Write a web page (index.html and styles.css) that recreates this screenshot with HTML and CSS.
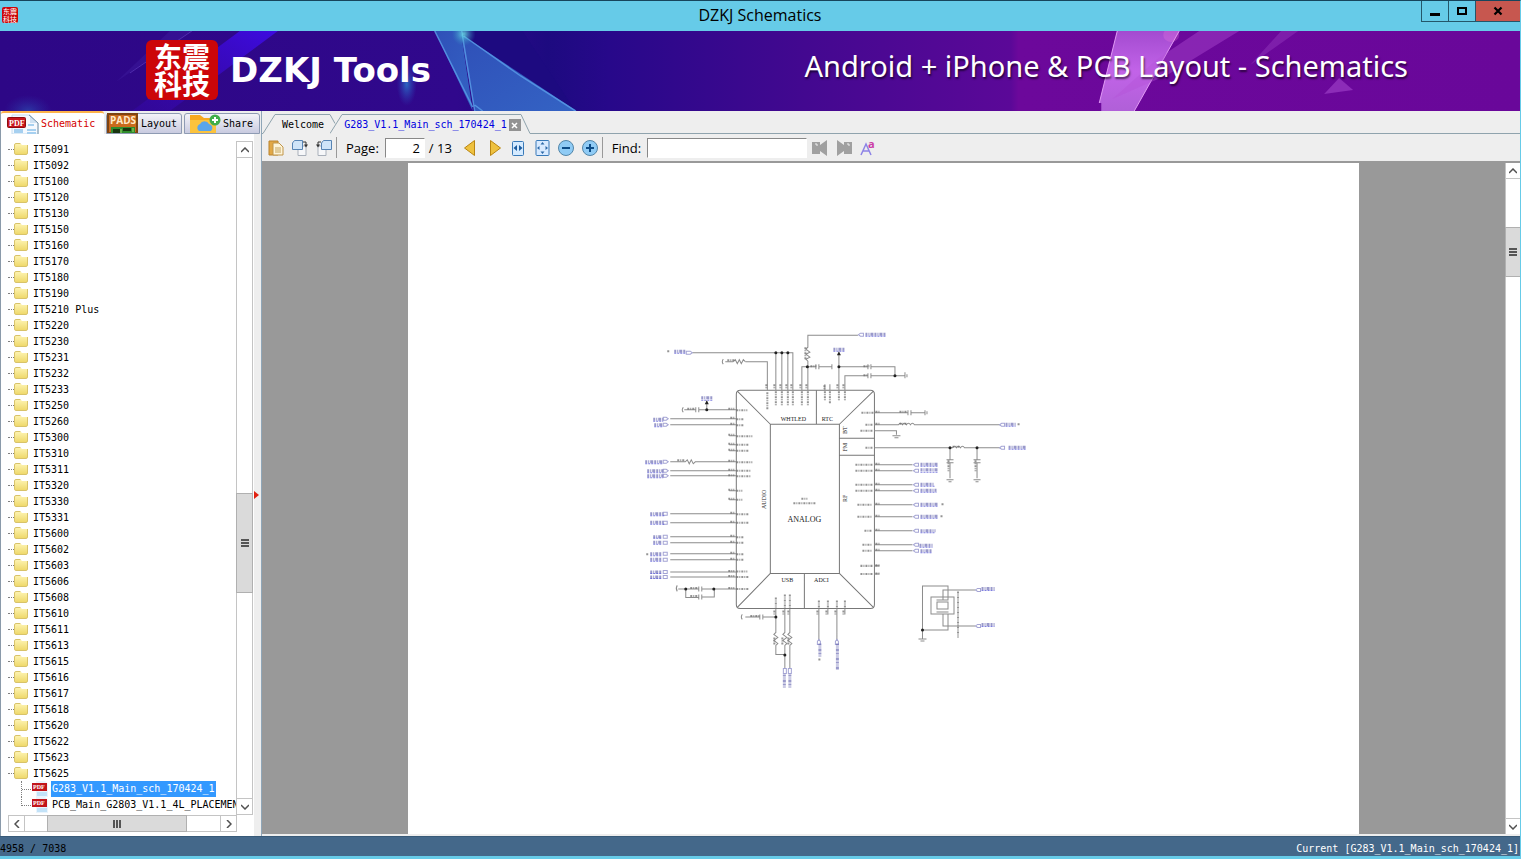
FILE: index.html
```
<!DOCTYPE html>
<html lang="en">
<head>
    <meta charset="UTF-8">
    <meta name="viewport" content="width=device-width, initial-scale=1.0">
    <title>DZKJ Schematics</title>
    <link rel="stylesheet" href="styles.css">
</head>
<body>
    <header class="titlebar">
        <span class="app-icon"><span>东震</span><span>科技</span></span>
        <h1 class="app-title">DZKJ Schematics</h1>
        <div class="window-buttons">
            <button aria-label="Minimize"><svg width="10" height="10"><path d="M0 7h10v3H0z"/></svg></button>
            <button aria-label="Maximize"><svg width="10" height="10"><path d="M1 2h8v6H1z" fill="none" stroke="#000" stroke-width="2"/></svg></button>
            <button class="close" aria-label="Close"><svg width="10" height="10"><path d="M1.500 1.500l7 7M8.500 1.500l-7 7" stroke="#000" stroke-width="2.200"/></svg></button>
        </div>
    </header>

    <div class="banner">
        <svg class="banner-bg" viewBox="0 31 1521 80" preserveAspectRatio="none" aria-hidden="true">
            <defs>
                <linearGradient id="base">
                    <stop offset="0" stop-color="#2d0786"/><stop offset=".3" stop-color="#30088c"/>
                    <stop offset=".36" stop-color="#1d0a80"/><stop offset=".4" stop-color="#27088a"/>
                    <stop offset=".53" stop-color="#430890"/><stop offset=".665" stop-color="#5b0898"/>
                    <stop offset=".67" stop-color="#6c089b"/><stop offset="1" stop-color="#69079a"/>
                </linearGradient>
                <linearGradient id="ray" x1="1" x2="0" y1="0" y2="1">
                    <stop offset="0" stop-color="#3d0be0"/><stop offset="1" stop-color="#3b08c0" stop-opacity=".25"/>
                </linearGradient>
                <linearGradient id="glass" x1="0" y1="0" x2="1" y2="1">
                    <stop offset="0" stop-color="#2f50b8"/><stop offset="1" stop-color="#3463c4"/>
                </linearGradient>
                <linearGradient id="pink" x1="0" y1="0" x2="0" y2="1">
                    <stop offset="0" stop-color="#a34bd0"/><stop offset=".5" stop-color="#c263e8"/><stop offset="1" stop-color="#b060d8"/>
                </linearGradient>
                <radialGradient id="glow"><stop offset="0" stop-color="#2a7fd0" stop-opacity=".8"/><stop offset="1" stop-color="#2a4fc0" stop-opacity="0"/></radialGradient>
                <radialGradient id="spark"><stop offset="0" stop-color="#6ff0ee"/><stop offset="1" stop-color="#3090c0" stop-opacity="0"/></radialGradient>
            </defs>
            <path d="M0 31h1521v80H0z" fill="url(#base)"/>
            <path d="M240 31h38L170 111h-38z" fill="url(#ray)"/>
            <path d="M170 31h22L116 82z" fill="#4a2ab0" opacity=".25"/>
            <path d="M192 31L130 73" stroke="#6f4fd0" opacity=".5"/>
            <ellipse cx="28" cy="111" rx="24" ry="16" fill="url(#glow)" opacity=".5"/>
            <ellipse cx="407" cy="84" rx="10" ry="22" fill="url(#glow)"/>
            <path d="M463 31h60l3 5 50 75h-98z" fill="#1d0a80"/>
            <path d="M435 31h26l12 80z" fill="url(#glass)"/>
            <path d="M461 34l14 77h102z" fill="url(#glass)"/>
            <path d="M435 31l38 76M462 31l13 80M464 36l57 40 55 35M475 105l8 6" fill="none" stroke="#5a9de8" stroke-width="1.500" opacity=".8"/>
            <circle cx="464" cy="34" r="12" fill="url(#spark)" opacity=".8"/>
            <path d="M1118 31h62l-45 80h-33v-8h-2z" fill="url(#pink)"/>
            <path d="M1180 31l-45 80M1118 31l-18 72" stroke="#e29bf5" fill="none"/>
            <path d="M1200 31h40l-72 44 -55 24 45-40z" fill="#b452d6" opacity=".4"/>
            <path d="M1282 31h17l-48 34z" fill="#9a40c4" opacity=".4"/>
            <path d="M1340 78l14 12-29 4z" fill="#8c2cb8"/>
            <ellipse cx="1172" cy="35" rx="8" ry="7" fill="#f27fe0" opacity=".25"/>
        </svg>
        <div class="brand">
            <span class="logo"><span>东震</span><span>科技</span></span>
            <strong class="brand-name">DZKJ Tools</strong>
        </div>
        <p class="tagline">Android + iPhone &amp; PCB Layout - Schematics</p>
    </div>

    <div class="workspace">
        <aside class="sidebar">
            <nav class="side-tabs">
                <button class="side-tab active">
                    <svg width="32" height="20" viewBox="0 0 32 20"><path d="M5 1h18l8 8v11H5z" fill="#f5f9fe" stroke="#c4dcee"/><path d="M23 1v8h8z" fill="#cfe2f3"/><path d="M22 1l9 8v11" fill="none" stroke="#7c95a8"/><path d="M7 16h9M21 11h6M20 16h9M7 18h9M20 19h9" stroke="#a6d0f0" stroke-width="2"/><rect x=".5" y="3.500" width="18" height="10" rx="1" fill="#c8151b" stroke="#8c0b10"/><text x="2" y="12" class="badge-text">PDF</text></svg>
                    Schematic
                </button>
                <button class="side-tab">
                    <svg width="32" height="20" viewBox="0 0 32 20"><path d="M1 1h29v19H1z" fill="#c96a1c" stroke="#7d4312" stroke-width="2"/><text x="3" y="11" class="pads-text">PADS</text><path d="M4 14h24v6H4z" fill="#2f8c2c"/><path d="M6 16h7v4H6zM16 15h8v3h-8z" fill="#19350f"/><path d="M14 16v4M26 15v4" stroke="#a2dc6a"/></svg>
                    Layout
                </button>
                <button class="side-tab share">
                    <svg width="32" height="20" viewBox="0 0 32 20"><path d="M1 2h10l4 3h11v15H1z" fill="#f6a81f"/><path d="M1 7h26v13H1z" fill="#fcc33c"/><path d="M9 17a4 4 0 0 1 2-6 5 5 0 0 1 9 0 4 4 0 0 1 2 7H10z" fill="#5aa5ea"/><circle cx="26" cy="7" r="5.500" fill="#3fae49"/><path d="M26 4v6M23 7h6" stroke="#fff" stroke-width="2"/></svg>
                    Share
                </button>
            </nav>
            <div class="tree-pane">
                <div class="tree-view">
                    <ul class="tree">
                        <li><i class="folder"></i>IT5091</li>
                        <li><i class="folder"></i>IT5092</li>
                        <li><i class="folder"></i>IT5100</li>
                        <li><i class="folder"></i>IT5120</li>
                        <li><i class="folder"></i>IT5130</li>
                        <li><i class="folder"></i>IT5150</li>
                        <li><i class="folder"></i>IT5160</li>
                        <li><i class="folder"></i>IT5170</li>
                        <li><i class="folder"></i>IT5180</li>
                        <li><i class="folder"></i>IT5190</li>
                        <li><i class="folder"></i>IT5210 Plus</li>
                        <li><i class="folder"></i>IT5220</li>
                        <li><i class="folder"></i>IT5230</li>
                        <li><i class="folder"></i>IT5231</li>
                        <li><i class="folder"></i>IT5232</li>
                        <li><i class="folder"></i>IT5233</li>
                        <li><i class="folder"></i>IT5250</li>
                        <li><i class="folder"></i>IT5260</li>
                        <li><i class="folder"></i>IT5300</li>
                        <li><i class="folder"></i>IT5310</li>
                        <li><i class="folder"></i>IT5311</li>
                        <li><i class="folder"></i>IT5320</li>
                        <li><i class="folder"></i>IT5330</li>
                        <li><i class="folder"></i>IT5331</li>
                        <li><i class="folder"></i>IT5600</li>
                        <li><i class="folder"></i>IT5602</li>
                        <li><i class="folder"></i>IT5603</li>
                        <li><i class="folder"></i>IT5606</li>
                        <li><i class="folder"></i>IT5608</li>
                        <li><i class="folder"></i>IT5610</li>
                        <li><i class="folder"></i>IT5611</li>
                        <li><i class="folder"></i>IT5613</li>
                        <li><i class="folder"></i>IT5615</li>
                        <li><i class="folder"></i>IT5616</li>
                        <li><i class="folder"></i>IT5617</li>
                        <li><i class="folder"></i>IT5618</li>
                        <li><i class="folder"></i>IT5620</li>
                        <li><i class="folder"></i>IT5622</li>
                        <li><i class="folder"></i>IT5623</li>
                        <li><i class="folder"></i>IT5625</li>
                        <li class="file"><svg width="16" height="16"><use href="#pdf"/></svg><span class="selected">G283_V1.1_Main_sch_170424_1</span></li>
                        <li class="file last"><svg width="16" height="16"><use href="#pdf"/></svg><span>PCB_Main_G2803_V1.1_4L_PLACEMENT</span></li>
                    </ul>
                    <div class="scroll-v">
                        <button aria-label="Scroll up"><svg width="8" height="6"><use href="#up"/></svg></button>
                        <div class="track"><div class="thumb tree-thumb"></div></div>
                        <button aria-label="Scroll down"><svg width="8" height="6"><use href="#down"/></svg></button>
                    </div>
                </div>
                <div class="scroll-h">
                    <button aria-label="Scroll left"><svg width="6" height="8"><path d="M5 0L1 4l4 4" fill="none" stroke="#505050" stroke-width="1.500"/></svg></button>
                    <div class="track"><div class="thumb tree-thumb-h"></div></div>
                    <button aria-label="Scroll right"><svg width="6" height="8"><path d="M1 0l4 4-4 4" fill="none" stroke="#505050" stroke-width="1.500"/></svg></button>
                </div>
            </div>
            <div class="splitter"><svg width="5" height="8"><path d="M0 0l5 4-5 4z" fill="#e02010"/></svg></div>
        </aside>

        <main class="document">
            <nav class="doc-tabs">
                <svg width="14" height="23"><path d="M0 22.500h1L13 3.500h1" class="edge"/></svg>
                <button class="doc-tab">Welcome</button>
                <svg width="14" height="23"><path d="M0 3.500l5 9M0 22.500L12 3.500h2" class="edge"/></svg>
                <button class="doc-tab current">G283_V1.1_Main_sch_170424_1</button>
                <span class="tab-end"><button class="tab-close" aria-label="Close tab"><svg width="7" height="7"><path d="M1 1l5 5M6 1L1 6" stroke="#fff" stroke-width="1.500"/></svg></button></span>
                <svg width="10" height="23"><path d="M0 3.500l9 19h1" class="edge"/></svg>
                <span class="tab-fill"></span>
            </nav>

            <div class="toolbar">
                <button aria-label="Open"><svg width="16" height="16"><path d="M1 1h9v14H1z" fill="#e2a845" stroke="#b9832f"/><path d="M5 3h6l4 4v8H5z" fill="#fdf4d9" stroke="#c09548"/><path d="M7 8h6M7 10h6M7 12h6" stroke="#c5a45c"/></svg></button>
                <button aria-label="Rotate left"><svg width="16" height="16"><path d="M6 6h8v9.500H6z" fill="#f6f7f9" stroke="#a9b0ba"/><path d="M.5 3l2-2.500h8v9h-10z" fill="#cfe4f8" stroke="#5784b4"/><path d="M11 2h3v4" fill="none" stroke="#333"/><path d="M12 4.500h4l-2 3z" fill="#333"/></svg></button>
                <button aria-label="Rotate right"><svg width="16" height="16"><path d="M2 6h8v9.500H2z" fill="#f6f7f9" stroke="#a9b0ba"/><path d="M5.500 3l2-2.500h8v9h-10z" fill="#cfe4f8" stroke="#5784b4"/><path d="M5 2H2v4" fill="none" stroke="#333"/><path d="M0 4.500h4l-2 3z" fill="#333"/></svg></button>
                <span class="separator"></span>
                <label for="page">Page:</label>
                <input id="page" class="page-input" type="text" value="2">
                <span class="page-count">/ 13</span>
                <button aria-label="Previous page"><svg width="16" height="16"><path d="M12.500 .5v15L2.500 8z" fill="#eec13f" stroke="#b98512"/></svg></button>
                <button aria-label="Next page"><svg width="16" height="16"><path d="M4.500 .5v15l10-7.500z" fill="#eec13f" stroke="#b98512"/></svg></button>
                <button aria-label="Fit width"><svg width="16" height="16"><rect x="2.500" y="1.500" width="11" height="14" rx="1" fill="#d4eaff" stroke="#3879b8"/><path d="M7 5v6L3.500 8zM9 5v6l3.500-3z" fill="#1c5c9f"/></svg></button>
                <button aria-label="Fit page"><svg width="16" height="16"><rect x="2" y=".5" width="13" height="15" rx="1" fill="#d8eaff" stroke="#3879b8"/><path d="M8.500 2l2 2.500h-4zM8.500 14l2-2.500h-4zM3 8l2.500-2v4zM14 8l-2.500-2v4z" fill="#2c69a8"/></svg></button>
                <button aria-label="Zoom out"><svg width="16" height="16"><circle cx="8" cy="8" r="7.500" fill="#8fcbf5" stroke="#5386a8"/><path d="M4 8h8" stroke="#0c4c87" stroke-width="2"/></svg></button>
                <button aria-label="Zoom in"><svg width="16" height="16"><circle cx="8" cy="8" r="7.500" fill="#8fcbf5" stroke="#5386a8"/><path d="M4 8h8M8 4v8" stroke="#0c4c87" stroke-width="2"/></svg></button>
                <span class="separator"></span>
                <label for="find">Find:</label>
                <input id="find" class="find-input" type="text">
                <button aria-label="Find previous"><svg width="16" height="16"><path d="M0 2h8v3l7-5v16l-7-5v3H0z" fill="#a0a0a0"/><path d="M3 4h2v2" stroke="#eee" fill="none"/></svg></button>
                <button aria-label="Find next"><svg width="16" height="16"><path d="M16 2H8v3L1 0v16l7-5v3h8z" fill="#a0a0a0"/><path d="M11 4h2v2" stroke="#eee" fill="none"/></svg></button>
                <button aria-label="Match case"><svg class="case-icon" width="16" height="16"><path d="M1 15L6 4l5 11M3 11h6" fill="none" stroke="#8d83e6" stroke-width="1.500"/><text x="8" y="8" class="case-text">a</text></svg></button>
            </div>

            <div class="viewer">
                <div class="canvas">
                    <div class="page">
                        <svg class="schematic" viewBox="408 163 950 671" preserveAspectRatio="xMidYMin meet" role="img" aria-label="Analog block schematic">
                            <!-- chip body -->
                            <g class="wire body">
                                <path d="M740 390h130q4 0 4 4v210q0 4-4 4H740q-4 0-4-4V394q0-4 4-4z"/>
                                <path d="M770 424h69v149h-69zM737 391l33 33M873 391l-34 33M737 607l33-34M873 607l-34-34M816 390v34M839 438h35M839 455h35M804 573v35"/>
                            </g>
                            <g class="block-name">
                                <text x="793" y="421">WHTLED</text><text x="827" y="421">RTC</text>
                                <text x="787" y="582">USB</text><text x="821" y="582">ADCI</text>
                                <text transform="translate(766 499) rotate(-90)">AUDIO</text>
                                <text transform="translate(847 430) rotate(-90)">BT</text>
                                <text transform="translate(847 447) rotate(-90)">FM</text>
                                <text transform="translate(847 498) rotate(-90)">RF</text>
                                <text x="804" y="522" class="chip-name">ANALOG</text>
                            </g>
                            <!-- top nets -->
                            <g class="wire">
                                <path d="M692 352.500h101M775.500 352v38M781.500 352v38M787.500 352v38M792.500 352v38M745 361.500h22V390M725 361.500h8M723 359q-2 2.500 0 5"/>
                                <path d="M733 361.500l2-2 2 4 2-4 2 4 2-4 2 2"/>
                                <path d="M807.500 390v-29l-2-2 4-2-4-3 4-2-4-3 2-2v-12h50M801.500 390v-23.500h14M818.500 366.500h13M815.500 364v5M818.500 364v5M831.500 364v5"/>
                                <path d="M838.500 390v-36M838.500 366.500h29M870.500 366.500h24v9M844.500 390v-14.500h23M870.500 375.500h34M867.500 364v5M870.500 364v5M867.500 373v5M870.500 373v5M904.500 372v6M906.500 374v3"/>
                                <path d="M824.500 384v6M829.500 384v6"/>
                            </g>
                            <!-- left nets -->
                            <g class="wire">
                                <path d="M684 409.500h11M698 409.500h38M695.500 407v5M698.500 407v5M683 407q-2 2.500 0 5M706.500 401v9M670 418.500h66M670 424.500h66M670 461.500h15l2-2 2 4 2-4 2 4 2-2h41M670 470.500h66M670 475.500h66"/>
                                <path d="M670 513.500h66M670 522.500h66M670 536.500h66M670 542.500h66M670 553.500h66M670 559.500h66M670 571.500h66M670 576.500h66M678 588.500h21M702 588.500h34M685.500 588v9h13M702 596.500h12v-8M698.500 586v5M701.500 586v5M698.500 594v5M701.500 594v5M677 585q-2 3 0 6"/>
                                <path d="M729 435.500h7M729 444.500h7M729 450.500h7M729 490.500h7M729 499.500h7"/>
                            </g>
                            <!-- right nets -->
                            <g class="wire">
                                <path d="M874 412.500h33M910 412.500h14M907.500 410v5M910.500 410v5M924.500 410v5M926.500 411v3M874 424.500h24q2-3 4 0q2-3 4 0q2-3 4 0q2-3 4 0h86M874 430.500h22v4M892 435.500h8M894 437.500h4"/>
                                <path d="M874 447.500h78q2-3 4 0q2-3 4 0q2-3 4 0h38M949.500 447v12M949.500 462v16M976.500 447v12M976.500 462v16M946 459.500h7M946 462.500h7M973 459.500h7M973 462.500h7M946 479.500h7M948 481.500h3M973 479.500h7M975 481.500h3"/>
                                <path d="M874 464.500h38M874 470.500h38M874 484.500h38M874 490.500h38M874 504.500h38M874 516.500h38M874 530.500h38M874 544.500h38M874 550.500h38M874 565.500h5M874 573.500h5"/>
                            </g>
                            <!-- bottom nets -->
                            <g class="wire">
                                <path d="M745 616.500h14M762 616.500h13M759.500 614v5M762.500 614v5M742 614q-2 2.500 0 5"/>
                                <path d="M775.500 608v24l-2 2 4 3-4 3 4 3-2 2v9h9M784.500 608v24l-2 2 4 3-4 3 4 3-2 2v23M789.500 608v24l-2 2 4 3-4 3 4 3-2 2v23M818.500 608v32M836.500 608v32M827.500 608v6M844.500 608v6"/>
                                <path d="M975 589.500h-32.500v10M947.500 600v-14.500h-25.500v53M922 629.500h25.500v-16M975 625.500h-32.500v-12M918 638.500h8M920 640.500h4M930.500 596.500h23v17h-23zM936.500 601.500h11v7h-11zM936 599.500h12M936 611.500h12"/>
                            </g>
                            <g class="dots">
                                <circle cx="775.500" cy="352.500" r="1.500"/><circle cx="781.500" cy="352.500" r="1.500"/><circle cx="787.500" cy="352.500" r="1.500"/>
                                <circle cx="807" cy="366.500" r="1.500"/><circle cx="838.500" cy="366.500" r="1.500"/><circle cx="894.500" cy="375.500" r="1.500"/>
                                <circle cx="706.500" cy="409.500" r="1.500"/><circle cx="685.500" cy="588.500" r="1.500"/><circle cx="713.500" cy="588.500" r="1.500"/>
                                <circle cx="949.500" cy="447.500" r="1.500"/><circle cx="976.500" cy="447.500" r="1.500"/><circle cx="775.500" cy="616.500" r="1.500"/>
                                <circle cx="784.500" cy="654.500" r="1.500"/><circle cx="922" cy="629.500" r="1.500"/>
                                <path d="M838.500 351l2 4h-4zM706.500 400l2 4h-4z"/>
                            </g>
                            <!-- net ports -->
                            <g class="port">
                                <path d="M686 351h4l2 1.500-2 1.500h-4zM863 333h-3l-2 1.500 2 1.500h3zM1004 423h-3l-2 1.500 2 1.500h3zM1004 446h-3l-2 1.500 2 1.500h3zM980 588h-3l-2 1.500 2 1.500h3zM980 624h-3l-2 1.500 2 1.500h3z"/>
                                <path d="M663 417h3l2 1.500-2 1.500h-3zM663 423h3l2 1.500-2 1.500h-3zM663 460h3l2 1.500-2 1.500h-3zM663 469h3l2 1.500-2 1.500h-3zM663 474h3l2 1.500-2 1.500h-3z"/>
                                <path d="M663 512h4v3h-4zM663 521h4v3h-4zM663 535h4v3h-4zM663 541h4v3h-4zM663 552h4v3h-4zM663 558h4v3h-4zM663 570h4v3h-4zM663 575h4v3h-4z"/>
                                <path d="M918 463h-3l-2 1.500 2 1.500h3zM918 469h-3l-2 1.500 2 1.500h3zM918 483h-3l-2 1.500 2 1.500h3zM918 489h-3l-2 1.500 2 1.500h3zM918 503h-3l-2 1.500 2 1.500h3zM918 515h-3l-2 1.500 2 1.500h3zM918 529h-3l-2 1.500 2 1.500h3zM918 543h-3l-2 1.500 2 1.500h3zM918 549h-3l-2 1.500 2 1.500h3z"/>
                                <path d="M817 644v-3l1.500-2 1.500 2v3zM835 644v-3l1.500-2 1.500 2v3zM783 668h3v5h-3zM788 668h3v5h-3z"/>
                            </g>
                            <!-- net names, too small to read at this zoom -->
                            <g class="net">
                                <path d="M674 351h12M865 334h21M833 349h12M701 397.500h12M653 419h10M654 424.500h9M645 461.500h18M647 470.500h16M647 475.500h16"/>
                                <path d="M650 513.500h14M650 522h14M653 536.500h9M653 542h9M650 553.500h12M650 559h12M650 571.500h12M650 576.500h12"/>
                                <path d="M1005 424h10M1008 447h18M920 464h17M920 469.500h17M920 484h14M920 490h16M920 504h17M920 516h17M920 530.500h15M919 545h13M920 550.500h12M981 588h13M981 624h13"/>
                                <path d="M819.500 643v14M837 643v26M784 674v13M789.500 674v13"/>
                            </g>
                            <g class="net-line">
                                <path d="M674 353h12M865 336h21M833 351h12M701 400h12M653 421h10M654 426.500h9M645 463.500h18M647 472.500h16M647 477.500h16M650 515.500h14M650 524h14M653 538h9M653 544h9M650 555.500h12M650 561h12M650 573h12M650 578h12M1005 426h10M1008 449h18M920 466h17M920 472h17M920 486h14M920 492h16M920 506h17M920 518h17M920 532.500h15M919 547h13M920 552.500h12M981 590h13M981 626h13"/>
                            </g>
                            <!-- pin names and part values -->
                            <g class="pin">
                                <path d="M736 410h11M736 419h7M736 425h7M736 436h16M736 444.500h12M736 450.500h12M736 462h16M736 470.500h14M736 476h14M736 490.500h6M736 499.500h6M736 514h13M736 522.500h13M736 537h8M736 542.500h8M736 554h8M736 559.500h8M736 571h11M736 576.500h12M736 588.500h13"/>
                                <path d="M728 408.500h6M730 417.500h4M730 423.500h4M728 434.500h6M728 443.500h6M728 449.500h6M728 460.500h6M728 469.500h6M728 475h6M728 489.500h6M728 498.500h6M730 512.500h4M730 521.500h4M730 535.500h4M730 541.500h4M730 552.500h4M730 558.500h4M728 570.500h6M728 575.500h6M728 587.500h6"/>
                                <path d="M861 412.500h12M865 424.500h7M860 430.500h12M865 447.500h7M855 464.500h17M855 470.500h17M855 484.500h17M855 490.500h17M857 504.500h15M857 516.500h15M864 530.500h8M862 544.500h9M862 550.500h9M860 565.500h12M860 573.500h12M875 411.500h4M875 423.500h4M875 463.500h4M875 469.500h4M875 483.500h4M875 489.500h4M875 503.500h4M875 515.500h4M875 529.500h4M875 543.500h4M875 549.500h4M875 565h4M875 573h4"/>
                                <path d="M767 392v17M775.500 391v14M781.500 391v14M787.500 391v14M792.500 391v14M801.500 391v14M807.500 391v14M824.500 391v10M829.500 391v12M838.500 391v10M844.500 391v9M775.500 597v11M784.500 594v14M789.500 594v14M818.500 600v8M827.500 600v8M836.500 600v8M844.500 600v8"/>
                                <path d="M766 384v5M774 384v5M780 384v5M786 384v5M791 384v5M800 384v5M806 384v5M824 385v5M837 384v5M843 384v5M774 610v4M783 610v4M788 610v4M817 610v4M826 610v4M835 610v4M843 610v4"/>
                                <path d="M727 360h8M810 366h6M863 366h6M863 375h5M687 408.500h8M677 460h8M690 587.500h8M690 595.500h8M750 615.500h9M899 411.500h8M899 423.500h8M952 446.500h7M948 460v11M975 460v11M805 347v12M774 637v8M782 637v8M788 637v8M801 498.500h6M793 503h22M957.500 591v46M667 351h3M1017 424h3M941 504h3M940 516h3M646 554h3M819 658v3"/>
                            </g>
                        </svg>
                    </div>
                </div>
                <div class="scroll-v viewer-scroll">
                    <button aria-label="Page up"><svg width="8" height="6"><use href="#up"/></svg></button>
                    <div class="track"><div class="thumb view-thumb"></div></div>
                    <button aria-label="Page down"><svg width="8" height="6"><use href="#down"/></svg></button>
                </div>
            </div>
        </main>
    </div>

    <footer class="statusbar">
        <span class="count">4958 / 7038</span>
        <span>Current [G283_V1.1_Main_sch_170424_1]</span>
    </footer>

    <svg class="symbols" width="0" height="0" aria-hidden="true">
        <symbol id="pdf" viewBox="0 0 16 16"><path d="M4 0h9l3 3v13H4z" fill="#eaf4fd"/><path d="M5 12h10M5 14h10" stroke="#9ad0f2"/><path d="M0 2h15v8H0z" fill="#c2151b"/><text x="1" y="8" class="pdf-text">PDF</text></symbol>
        <symbol id="up" viewBox="0 0 8 6"><path d="M0 5l4-4 4 4" fill="none" stroke="#505050" stroke-width="1.500"/></symbol>
        <symbol id="down" viewBox="0 0 8 6"><path d="M0 1l4 4 4-4" fill="none" stroke="#505050" stroke-width="1.500"/></symbol>
    </svg>
</body>
</html>
```
FILE: styles.css
```
* {
    box-sizing: border-box;
}
body {
    margin: 0;
    height: 100vh;
    display: flex;
    flex-direction: column;
    overflow: hidden;
    background-color: #eeeeee;
    border-top: 1px solid #17455c;
    border-right: 1px solid #66cbe8;
    border-bottom: 3px solid #66cbe8;
    font-family: "DejaVu Sans Mono", "Noto Sans CJK SC", monospace;
    font-size: 10px;
    color: #000;
}
button {
    margin: 0;
    padding: 0;
    border: none;
    background: none;
    font: inherit;
    color: inherit;
    display: flex;
    align-items: center;
    justify-content: center;
    flex: none;
}
svg {
    display: block;
    flex: none;
}
.symbols {
    position: absolute;
}

/* title bar */
.titlebar {
    display: grid;
    grid-template-columns: 1fr auto 1fr;
    height: 30px;
    flex: none;
    background-color: #66cbe8;
}
.app-icon {
    width: 16px;
    height: 16px;
    margin: 6px 2px;
    border-radius: 2px;
    background-color: #cc0609;
    color: #fff;
    font: 7px/8px "Noto Sans CJK SC", sans-serif;
    display: flex;
    flex-direction: column;
    align-items: center;
}
.app-title {
    margin: 0;
    font: 16px/29px "Open Sans", "Noto Sans", sans-serif;
}
.window-buttons {
    display: flex;
    justify-content: flex-end;
}
.window-buttons button {
    width: 27px;
    height: 21px;
    border: 1px solid #24566a;
    border-top: none;
    border-right: none;
}
.window-buttons .close {
    width: 45px;
    background-color: #c7574f;
}

/* banner */
.banner {
    position: relative;
    display: flex;
    align-items: center;
    justify-content: space-between;
    height: 80px;
    flex: none;
    padding: 0 112px 2px 146px;
    background-color: #30088c;
    color: #fff;
}
.banner-bg {
    position: absolute;
    inset: 0;
    width: 100%;
    height: 100%;
}
.brand {
    position: relative;
    display: flex;
    align-items: center;
    gap: 12px;
}
.logo {
    display: flex;
    flex-direction: column;
    align-items: center;
    justify-content: center;
    width: 72px;
    height: 60px;
    border-radius: 6px;
    background-color: #cc0609;
    font: bold 28px/27px "Noto Sans CJK SC", sans-serif;
}
.brand-name {
    font: bold 34px/40px "DejaVu Sans", sans-serif;
}
.tagline {
    position: relative;
    margin: 0;
    padding-bottom: 8px;
    font: 29px/36px "Noto Sans", sans-serif;
    text-shadow: 1px 2px 2px rgba(0, 0, 0, 0.6);
}

.workspace {
    display: flex;
    flex: 1;
    min-height: 0;
}

/* sidebar */
.sidebar {
    position: relative;
    display: flex;
    flex-direction: column;
    width: 261px;
    flex: none;
    border-left: 1px solid #8a9aaa;
}
.side-tabs {
    display: flex;
    height: 23px;
    flex: none;
    gap: 2px;
    padding-right: 2px;
}
.side-tab {
    align-items: flex-end;
    justify-content: flex-start;
    gap: 2px;
    width: 76px;
    height: 21px;
    margin-top: 2px;
    border: 1px solid #8e9bb3;
    border-radius: 3px 3px 0 0;
    background-image: linear-gradient(#f3f3f8, #c9cbe0);
    line-height: 18px;
    white-space: nowrap;
}
.side-tab.share {
    padding-left: 4px;
}
.side-tab.active {
    width: 103px;
    height: 23px;
    margin: 0;
    padding-left: 6px;
    border: none;
    border-top: 2px solid #fdb24a;
    background: #fff;
    color: #d40000;
    line-height: 20px;
}
.badge-text {
    font: bold 8px "Liberation Serif", serif;
    fill: #fff;
}
.pads-text {
    font: bold 10px "Open Sans", sans-serif;
    fill: #ffe9c8;
}
.tree-pane {
    flex: 1;
    min-height: 0;
    display: flex;
    flex-direction: column;
    margin-right: 7px;
    padding: 7px 1px 4px 7px;
    background-color: #fff;
}
.tree-view {
    display: flex;
    flex: 1;
    min-height: 0;
}
.tree {
    flex: 1;
    min-width: 0;
    margin: 0;
    padding: 0;
    list-style: none;
    overflow: hidden;
}
.tree li {
    display: flex;
    align-items: center;
    height: 16px;
    white-space: nowrap;
}
.tree li::before {
    content: "";
    width: 6px;
    flex: none;
    border-top: 1px dotted #808080;
}
.folder {
    width: 14px;
    height: 12px;
    margin-right: 5px;
    border: 1px solid #d8c36a;
    border-radius: 2px;
    background-image: linear-gradient(#fdf3b0, #efd96c);
    clip-path: polygon(0 0, 6px 0, 8px 2px, 100% 2px, 100% 100%, 0 100%);
}
.tree .file::before {
    width: 10px;
    height: 16px;
    margin-left: 13px;
    border-top: none;
    border-left: 1px dotted #808080;
    background: linear-gradient(90deg, #808080 50%, transparent 50%) 0 8px / 2px 1px repeat-x;
}
.tree .last::before {
    height: 9px;
    align-self: flex-start;
}
.file svg {
    margin-right: 3px;
}
.file span {
    padding: 0 1px;
    line-height: 16px;
}
.file .selected {
    background-color: #3399ff;
    color: #fff;
}
.pdf-text {
    font: bold 6px "Liberation Serif", serif;
    fill: #fff;
}
.splitter {
    position: absolute;
    right: 2px;
    top: 380px;
}

/* scroll bars */
.scroll-v,
.scroll-h {
    display: flex;
    flex: none;
    border: 1px solid #c4c4c4;
    background-color: #fff;
}
.scroll-v {
    flex-direction: column;
    width: 17px;
}
.scroll-h {
    height: 17px;
    margin-right: 16px;
}
.scroll-v button {
    height: 16px;
    border-bottom: 1px solid #c4c4c4;
}
.scroll-v button:last-child {
    border-bottom: none;
    border-top: 1px solid #c4c4c4;
}
.scroll-h button {
    width: 16px;
    border-right: 1px solid #c4c4c4;
}
.scroll-h button:last-child {
    border-right: none;
    border-left: 1px solid #c4c4c4;
}
.track {
    flex: 1;
}
.scroll-h .track {
    display: flex;
}
.scroll-v .track {
    display: flex;
    flex-direction: column;
}
.thumb {
    display: flex;
    align-items: center;
    justify-content: center;
    background-color: #dadada;
    outline: 1px solid #b0b0b0;
}
.thumb::before {
    content: "";
    width: 8px;
    height: 8px;
    background-image: repeating-linear-gradient(#555 0 2px, transparent 2px 3px);
}
.tree-thumb {
    margin-top: 336px;
    height: 98px;
}
.tree-thumb-h {
    margin-left: 23px;
    width: 138px;
}
.tree-thumb-h::before {
    background-image: repeating-linear-gradient(90deg, #555 0 2px, transparent 2px 3px);
}
.view-thumb {
    margin-top: 49px;
    height: 48px;
}

/* document area */
.document {
    display: flex;
    flex-direction: column;
    flex: 1;
    min-width: 0;
    border-left: 1px solid #8fa6b8;
}
.doc-tabs {
    display: flex;
    height: 23px;
    flex: none;
}
.edge {
    fill: none;
    stroke: #8fa3ad;
}
.doc-tab,
.tab-end {
    height: 20px;
    margin-top: 3px;
    border-top: 1px solid #8fa3ad;
}
.doc-tab {
    padding: 0 6px;
    white-space: nowrap;
}
.doc-tab.current {
    padding: 0 2px 0 0;
    color: #0000e0;
}
.tab-close {
    width: 12px;
    height: 12px;
    margin-top: 4px;
    background-color: #929292;
}
.tab-fill {
    flex: 1;
    border-bottom: 1px solid #8fa3ad;
}
.toolbar {
    display: flex;
    align-items: center;
    gap: 8px;
    height: 29px;
    flex: none;
    padding-left: 6px;
    border-bottom: 2px solid #999;
    font: 13px/20px "Open Sans", "Noto Sans", sans-serif;
}
.separator {
    width: 1px;
    height: 21px;
    margin: 0 1px 0 -4px;
    background-color: #999;
}
.toolbar input {
    height: 20px;
    border: 1px solid #fff;
    border-top-color: #888;
    border-left-color: #888;
    padding: 0 4px;
    background-color: #fff;
    font: inherit;
}
.toolbar .page-input {
    width: 40px;
    margin-left: -2px;
    text-align: right;
}
.page-count {
    margin: 0 2px 0 -4px;
    white-space: nowrap;
}
.toolbar .find-input {
    width: 160px;
    margin: 0 -3px 0 -2px;
}
.case-icon {
    overflow: visible;
}
.case-text {
    font: bold 11px "Open Sans", sans-serif;
    fill: #cc3ca6;
}
.viewer {
    display: flex;
    flex: 1;
    min-height: 0;
    margin-bottom: 2px;
}
.canvas {
    flex: 1;
    min-width: 0;
    display: flex;
    justify-content: center;
    background-color: #999;
}
.page {
    width: 76.5%;
    background-color: #fff;
}
.viewer-scroll {
    width: 15px;
    border-width: 0 0 0 1px;
}

/* schematic drawing */
.schematic {
    width: 100%;
}
.wire path {
    fill: none;
    stroke: #8c8c8c;
}
.body path {
    stroke: #777;
}
.dots {
    fill: #222;
}
.port path {
    fill: #fff;
    stroke: #a4a4d4;
}
.net path,
.net-line path {
    fill: none;
    stroke: #6e6eb4;
    stroke-width: 3px;
    stroke-dasharray: 2 1 1 1 3 1;
    opacity: 0.7;
}
.net-line path {
    stroke: #4848d0;
    stroke-width: 1px;
    stroke-dasharray: 2 1;
}
.pin path {
    fill: none;
    stroke: #666;
    stroke-width: 2px;
    stroke-dasharray: 2 1 1 1;
    opacity: 0.7;
}
.block-name text {
    font: 6px "Liberation Serif", serif;
    text-anchor: middle;
    fill: #222;
}
.block-name .chip-name {
    font-size: 8px;
}

/* status bar */
.statusbar {
    display: flex;
    align-items: center;
    justify-content: space-between;
    height: 20px;
    flex: none;
    padding: 4px 1px 0 0;
    background-color: #44688a;
    border-top: 1px solid #385a78;
    color: #fff;
}
.statusbar .count {
    color: #000;
}
```
